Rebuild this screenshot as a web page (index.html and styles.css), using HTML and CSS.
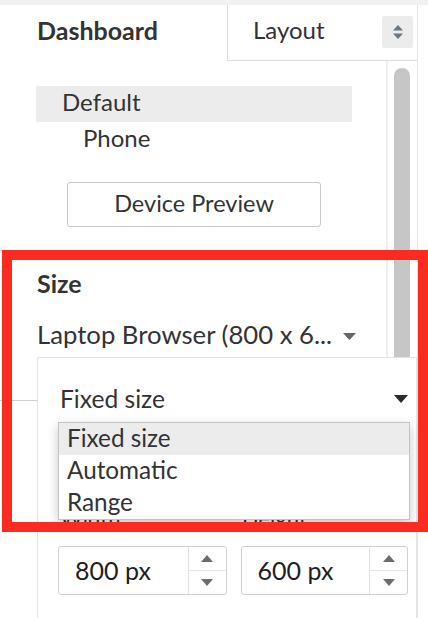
FILE: index.html
```html
<!DOCTYPE html>
<html>
<head>
    <meta charset="UTF-8">
    <title>Dashboard Layout</title>
    <link rel="stylesheet" href="styles.css">
</head>
<body>

<div class="sidebar">
    <div class="tabs">
        <div class="tab tabActive">Dashboard</div>
        <div class="tab tabLayout">
            <span>Layout</span>
            <span class="tabSpin">
                <svg width="10" height="14" viewBox="0 0 10 14"><path d="M5 0 L10 5.5 H0 Z M5 14 L10 8.5 H0 Z" fill="#6b7683"/></svg>
            </span>
        </div>
    </div>

    <div class="scroller">
        <div class="content">
            <div class="device deviceSelected">Default</div>
            <div class="device devicePhone">Phone</div>
            <button type="button" class="previewButton">Device Preview</button>

            <div class="section">
                <div class="sectionTitle">Size</div>
                <div class="sizePick">Laptop Browser (800 x 6...
                    <svg class="caret" width="13" height="7" viewBox="0 0 13 7"><path d="M0 0 H13 L6.5 7 Z" fill="#666"/></svg>
                </div>
            </div>
            <div class="section sectionNext"></div>
        </div>
        <div class="track">
            <div class="thumb"></div>
        </div>
    </div>

    <div class="popup">
        <div class="combo">
            <span>Fixed size</span>
            <svg width="14" height="8" viewBox="0 0 14 8"><path d="M0 0 H14 L7 8 Z" fill="#2b2b2b"/></svg>
        </div>
        <div class="fields">
            <label class="field">Width</label>
            <label class="field">Height</label>
        </div>
        <div class="fields">
            <div class="number">
                <span class="numberValue">800 px</span>
                <span class="spin">
                    <span class="spinHalf"><svg width="12" height="7" viewBox="0 0 12 7"><path d="M6 0 L12 7 H0 Z" fill="#6d6d6d"/></svg></span>
                    <span class="spinHalf"><svg width="12" height="7" viewBox="0 0 12 7"><path d="M0 0 H12 L6 7 Z" fill="#6d6d6d"/></svg></span>
                </span>
            </div>
            <div class="number">
                <span class="numberValue">600 px</span>
                <span class="spin">
                    <span class="spinHalf"><svg width="12" height="7" viewBox="0 0 12 7"><path d="M6 0 L12 7 H0 Z" fill="#6d6d6d"/></svg></span>
                    <span class="spinHalf"><svg width="12" height="7" viewBox="0 0 12 7"><path d="M0 0 H12 L6 7 Z" fill="#6d6d6d"/></svg></span>
                </span>
            </div>
        </div>

        <ul class="options">
            <li class="optionActive">Fixed size</li>
            <li>Automatic</li>
            <li>Range</li>
        </ul>
    </div>

    <div class="highlight"></div>
</div>

</body>
</html>
```

FILE: styles.css
```css
body {
    margin: 0;
    background-color: #fff;
    border-top: 5px solid #f1f1f1;
    font-family: Lato, "Liberation Sans", sans-serif;
    color: #333;
    overflow: hidden;
    height: 613px;
}

.sidebar {
    position: relative;
    width: 417px;
    height: 613px;
    border-right: 1px solid #e6e6e6;
    display: flex;
    flex-direction: column;
}

.tabs {
    display: flex;
    height: 56px;
}

.tab {
    box-sizing: border-box;
    padding-top: 10px;
    line-height: 30px;
}

.tabActive {
    width: 227px;
    padding-left: 37px;
    font-size: 25px;
    font-weight: bold;
}

.tabLayout {
    flex: 1;
    display: flex;
    justify-content: space-between;
    padding-left: 25px;
    padding-right: 4px;
    font-size: 24px;
    border-left: 1px solid #dcdcdc;
    border-bottom: 1px solid #dcdcdc;
}

.tabSpin {
    width: 31px;
    height: 32px;
    margin-top: 1px;
    background: #ececec;
    border-radius: 2px;
    display: flex;
    align-items: center;
    justify-content: center;
}

.scroller {
    flex: 1;
    display: flex;
}

.content {
    flex: 1;
    padding-top: 25px;
}

.device {
    height: 36px;
    box-sizing: border-box;
    line-height: 32px;
    padding-bottom: 4px;
    font-size: 24px;
}

.deviceSelected {
    margin-left: 36px;
    width: 316px;
    padding-left: 26px;
    background: #ececec;
}

.devicePhone {
    padding-left: 83px;
}

.previewButton {
    display: block;
    margin: 24px 0 0 67px;
    width: 254px;
    height: 45px;
    padding: 0 0 2px;
    border: 1px solid #c8c8c8;
    border-radius: 3px;
    background: #fff;
    font-family: Lato, "Liberation Sans", sans-serif;
    font-size: 23.5px;
    line-height: 41px;
    color: #333;
}

.section {
    margin-top: 23px;
    border-top: 1px solid #cfcfcf;
    padding: 17px 0 0 37px;
}

.sectionTitle {
    font-size: 25px;
    font-weight: bold;
    line-height: 30px;
}

.sizePick {
    margin-top: 21px;
    margin-bottom: 51px;
    font-size: 25.7px;
    line-height: 30px;
}

.caret {
    margin-left: 4px;
    vertical-align: 4px;
}

.sectionNext {
    margin-top: 0;
}

.track {
    width: 29px;
    border-left: 2px solid #efefef;
}

.thumb {
    margin: 7px 0 0 6px;
    width: 16px;
    height: 320px;
    background: #c6c6c6;
    border-radius: 8px 8px 0 0;
}

/* size popup */
.popup {
    position: absolute;
    left: 37px;
    top: 352px;
    width: 380px;
    height: 270px;
    background: #fff;
    border: 1px solid #e3e3e3;
    padding: 0 8px 0 20px;
    box-sizing: border-box;
}

.combo {
    margin-top: 26px;
    display: flex;
    justify-content: space-between;
    align-items: center;
    padding-left: 2px;
    font-size: 24.6px;
    line-height: 30px;
}

.fields {
    display: flex;
    gap: 14px;
}

.field {
    width: 168px;
    padding-left: 2px;
    margin-top: 91px;
    font-size: 22px;
    line-height: 26px;
    color: #333;
}

.fields + .fields {
    margin-top: 15px;
}

.number {
    width: 169px;
    height: 49px;
    box-sizing: border-box;
    border: 1px solid #d0d0d0;
    border-radius: 3px;
    display: flex;
}

.number + .number {
    width: 168px;
}

.numberValue {
    flex: 1;
    padding-left: 16px;
    font-size: 25px;
    line-height: 47px;
    color: #1e1e1e;
}

.spin {
    width: 37px;
    border-left: 1px solid #e2e2e2;
    display: flex;
    flex-direction: column;
}

.spinHalf {
    flex: 1;
    display: flex;
    align-items: center;
    justify-content: center;
}

.spinHalf + .spinHalf {
    border-top: 1px solid #e6e6e6;
}

.options {
    position: absolute;
    left: 20px;
    top: 64px;
    width: 352px;
    margin: 0;
    padding: 0;
    list-style: none;
    border: 1px solid #c4c4c4;
    box-sizing: border-box;
    background: #fff;
    box-shadow: 0 4px 10px rgba(0, 0, 0, 0.22);
}

.options li {
    height: 32px;
    box-sizing: border-box;
    padding: 0 0 2px 8px;
    font-size: 24.3px;
    line-height: 30px;
    color: #333;
}

.options .optionActive {
    background: #ececec;
}

.highlight {
    position: absolute;
    left: 2px;
    top: 245px;
    width: 426px;
    height: 282px;
    box-sizing: border-box;
    border: 10px solid #fc2b1f;
}
```
